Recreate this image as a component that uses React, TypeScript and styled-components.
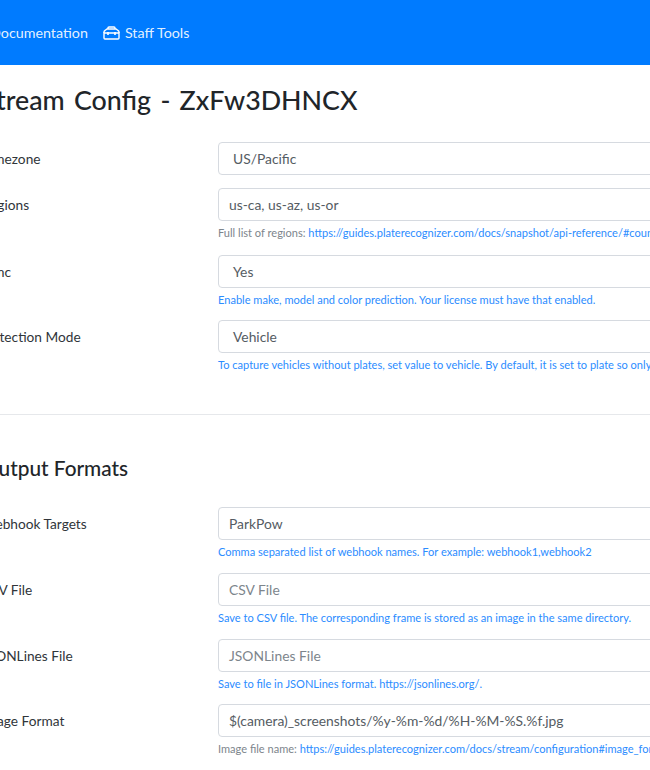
import React from "react";
import styled, { createGlobalStyle } from "styled-components";

const Global = createGlobalStyle`
  html, body { margin: 0; padding: 0; background: #fff; overflow: hidden; }
  body { font-family: Lato, "Open Sans", sans-serif; font-size: 14px; color: #212529; }
`;

const Viewport = styled.div`
  width: 650px;
  height: 770px;
  overflow: hidden;
`;

const Navbar = styled.nav`
  height: 65px;
  background: #007bff;
  display: flex;
  align-items: center;
  box-sizing: border-box;
`;

const NavLink = styled.a<{ $offset: number }>`
  display: flex;
  align-items: center;
  gap: 5px;
  color: rgba(255, 255, 255, 0.9);
  font-size: 14.3px;
  margin-left: ${(p) => p.$offset}px;
  white-space: nowrap;
`;

const Content = styled.main`
  width: 1100px;
  margin-left: -18px;
`;

const Title = styled.h2`
  margin: 0;
  padding-top: 17px;
  height: 77px;
  box-sizing: border-box;
  font-size: 26.8px;
  font-weight: 500;
  word-spacing: 2.5px;
  line-height: 36px;
`;

const Row = styled.div<{ $gap: number }>`
  display: grid;
  grid-template-columns: 236px 1fr;
  margin-bottom: ${(p) => p.$gap}px;
`;

const Label = styled.label`
  line-height: 33px;
  font-size: 13.7px;
  color: #30353a;
`;

const Field = styled.div`
  min-width: 0;
`;

const Input = styled.div<{ $select?: boolean; $placeholder?: boolean }>`
  height: 33px;
  box-sizing: border-box;
  border: 1px solid #d6dae0;
  border-radius: 4px;
  line-height: 31px;
  padding-left: ${(p) => (p.$select ? 14 : 10)}px;
  font-size: 13.85px;
  color: ${(p) => (p.$placeholder ? "#7d858c" : "#555c63")};
  white-space: nowrap;
`;

const Hint = styled.div<{ $primary?: boolean }>`
  margin-top: 3px;
  height: 18px;
  line-height: 17px;
  font-size: 11.05px;
  color: ${(p) => (p.$primary ? "#2b8cff" : "#7d858c")};
  white-space: nowrap;
`;

const HintLink = styled.a`
  color: #2b8cff;
`;

const Divider = styled.hr`
  margin: 0;
  border: 0;
  border-top: 1px solid #e6e8eb;
`;

const Section = styled.h4`
  margin: 0;
  padding-top: 40px;
  height: 92px;
  box-sizing: border-box;
  font-size: 20.8px;
  font-weight: 500;
  line-height: 26px;
`;

const ToolboxIcon = () => (
  <svg width="17" height="14" viewBox="0 0 17 14" fill="none" stroke="#fff" strokeWidth="1.4">
    <path d="M1 7 L1 12 Q1 13 2 13 L15 13 Q16 13 16 12 L16 7 Z" />
    <path d="M1 7 L1 6 Q1 5 2 4.5 L4 3 L13 3 L15 4.5 Q16 5 16 6 L16 7" />
    <path d="M5 3 L5 2 Q5 1 6 1 L11 1 Q12 1 12 2 L12 3" />
    <path d="M5 6 V9 M12 6 V9" strokeWidth="1.6" />
  </svg>
);

export default function App() {
  return (
    <Viewport>
      <Global />
      <Navbar>
        <NavLink $offset={-10}>Documentation</NavLink>
        <NavLink $offset={15}>
          <ToolboxIcon />
          Staff Tools
        </NavLink>
      </Navbar>
      <Content>
        <Title>Stream Config - ZxFw3DHNCX</Title>
        <Row $gap={13}>
          <Label>Timezone</Label>
          <Field>
            <Input $select>US/Pacific</Input>
          </Field>
        </Row>
        <Row $gap={13}>
          <Label>Regions</Label>
          <Field>
            <Input>us-ca, us-az, us-or</Input>
            <Hint>
              Full list of regions:{" "}
              <HintLink>https://guides.platerecognizer.com/docs/snapshot/api-reference/#countries</HintLink>
            </Hint>
          </Field>
        </Row>
        <Row $gap={11}>
          <Label>mmc</Label>
          <Field>
            <Input $select>Yes</Input>
            <Hint $primary>Enable make, model and color prediction. Your license must have that enabled.</Hint>
          </Field>
        </Row>
        <Row $gap={40}>
          <Label>Detection Mode</Label>
          <Field>
            <Input $select>Vehicle</Input>
            <Hint $primary>
              To capture vehicles without plates, set value to vehicle. By default, it is set to plate so only vehicles with plates are detected.
            </Hint>
          </Field>
        </Row>
        <Divider />
        <Section>Output Formats</Section>
        <Row $gap={12}>
          <Label>Webhook Targets</Label>
          <Field>
            <Input>ParkPow</Input>
            <Hint $primary>Comma separated list of webhook names. For example: webhook1,webhook2</Hint>
          </Field>
        </Row>
        <Row $gap={12}>
          <Label>CSV File</Label>
          <Field>
            <Input $placeholder>CSV File</Input>
            <Hint $primary>Save to CSV file. The corresponding frame is stored as an image in the same directory.</Hint>
          </Field>
        </Row>
        <Row $gap={11}>
          <Label>JSONLines File</Label>
          <Field>
            <Input $placeholder>JSONLines File</Input>
            <Hint $primary>Save to file in JSONLines format. https://jsonlines.org/.</Hint>
          </Field>
        </Row>
        <Row $gap={12}>
          <Label>Image Format</Label>
          <Field>
            <Input>$(camera)_screenshots/%y-%m-%d/%H-%M-%S.%f.jpg</Input>
            <Hint>
              Image file name:{" "}
              <HintLink>https://guides.platerecognizer.com/docs/stream/configuration#image_format</HintLink>
            </Hint>
          </Field>
        </Row>
      </Content>
    </Viewport>
  );
}
